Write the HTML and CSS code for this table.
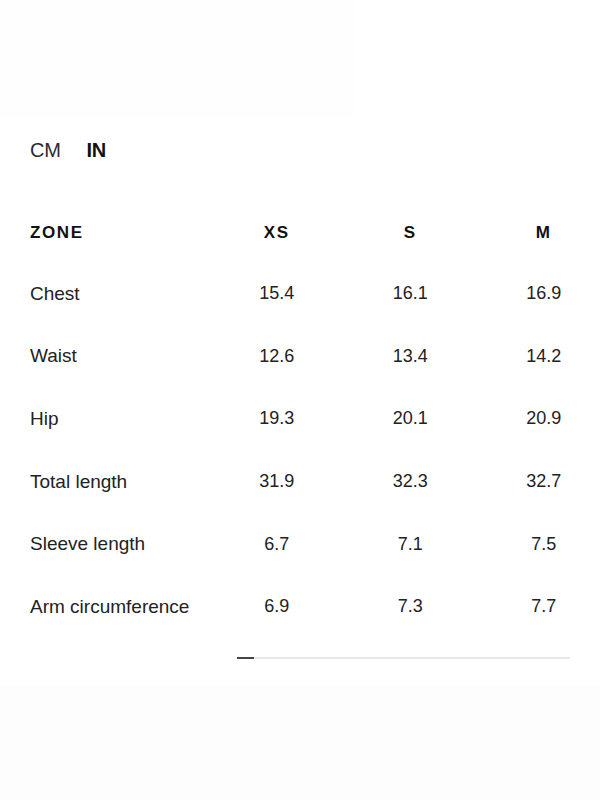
FILE: index.html
```html
<!DOCTYPE html>
<html>
<head>
<meta charset="utf-8">
<link rel="stylesheet" href="styles.css">
</head>
<body>
<div class="page">
  <div class="haze-top"></div>
  <div class="units">
    <span class="unit">CM</span>
    <span class="unit active">IN</span>
  </div>
  <div class="table-wrap">
    <div class="table">
      <div class="row head">
        <div class="label">ZONE</div>
        <div class="cell">XS</div>
        <div class="cell">S</div>
        <div class="cell">M</div>
      </div>
      <div class="row">
        <div class="label">Chest</div>
        <div class="cell">15.4</div>
        <div class="cell">16.1</div>
        <div class="cell">16.9</div>
      </div>
      <div class="row">
        <div class="label">Waist</div>
        <div class="cell">12.6</div>
        <div class="cell">13.4</div>
        <div class="cell">14.2</div>
      </div>
      <div class="row">
        <div class="label">Hip</div>
        <div class="cell">19.3</div>
        <div class="cell">20.1</div>
        <div class="cell">20.9</div>
      </div>
      <div class="row">
        <div class="label">Total length</div>
        <div class="cell">31.9</div>
        <div class="cell">32.3</div>
        <div class="cell">32.7</div>
      </div>
      <div class="row">
        <div class="label">Sleeve length</div>
        <div class="cell">6.7</div>
        <div class="cell">7.1</div>
        <div class="cell">7.5</div>
      </div>
      <div class="row">
        <div class="label">Arm circumference</div>
        <div class="cell">6.9</div>
        <div class="cell">7.3</div>
        <div class="cell">7.7</div>
      </div>
    </div>
  </div>
  <div class="scroll">
    <div class="track"><div class="thumb"></div></div>
  </div>
  <div class="haze-bottom"></div>
</div>
</body>
</html>
```

FILE: styles.css
```css
html, body {
  margin: 0;
  padding: 0;
  background: #ffffff;
}
body {
  font-family: "Liberation Sans", Arial, sans-serif;
  color: #1f1f1f;
  width: 600px;
  height: 800px;
  overflow: hidden;
}
.page {
  display: flex;
  flex-direction: column;
  width: 600px;
  height: 800px;
}
.haze-top {
  height: 116px;
  margin: 0 245px 0 0;
  background: #fefefe;
  flex-shrink: 0;
}
.units {
  display: flex;
  gap: 26px;
  padding: 20px 0 0 30px;
  height: 28px;
  align-items: center;
}
.unit {
  font-size: 20px;
  font-weight: 300;
  color: #2a2a2a;
  letter-spacing: -0.3px;
}
.unit.active {
  font-weight: 700;
  color: #111;
}
.table-wrap {
  overflow: hidden;
  padding-top: 39.5px;
  padding-left: 30px;
}
.table {
  display: flex;
  flex-direction: column;
  width: 700px;
}
.row {
  display: flex;
  align-items: center;
  height: 62.6px;
  font-size: 18px;
}
.row.head {
  height: 59px;
}
.label {
  width: 180px;
  flex-shrink: 0;
  color: #222;
  white-space: nowrap;
  font-size: 19px;
}
.cell {
  width: 133.5px;
  text-align: center;
  flex-shrink: 0;
  color: #222;
}
.head .label, .head .cell {
  font-weight: 700;
  font-size: 17px;
  letter-spacing: 1.6px;
  color: #111;
}
.scroll {
  padding: 19px 30px 0 237px;
}
.track {
  height: 2px;
  background: #e8e8e8;
  display: flex;
}
.thumb {
  width: 17px;
  height: 2px;
  background: #444;
}
.haze-bottom {
  margin-top: 26px;
  flex: 1;
  background: #fdfdfd;
}
```
